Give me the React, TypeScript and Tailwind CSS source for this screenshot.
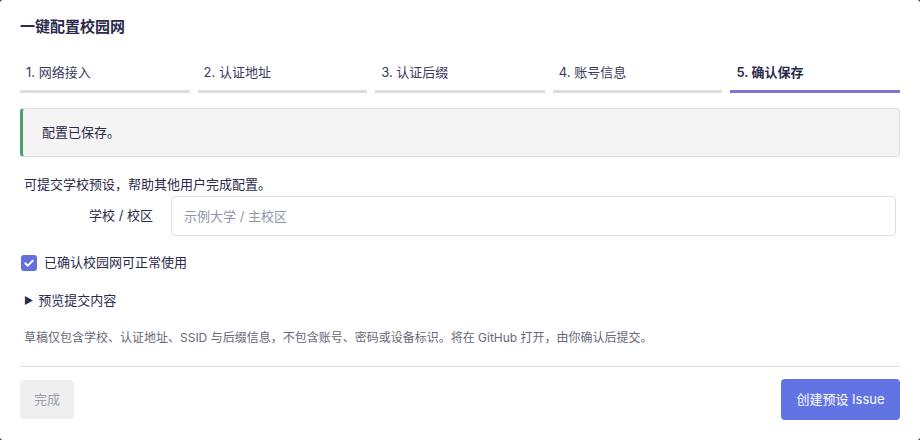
import { useState } from "react";

const steps = ["1. 网络接入", "2. 认证地址", "3. 认证后缀", "4. 账号信息", "5. 确认保存"];

function StepBar({ current }: { current: number }) {
  return (
    <div className="mt-[22px] grid grid-cols-5 gap-2">
      {steps.map((label, i) => {
        const active = i === current;
        return (
          <div key={label} className="flex flex-col">
            <div
              className={
                active
                  ? "h-[24px] pl-[6px] text-[13px] leading-[24px] font-semibold text-[#2b2a4a]"
                  : "h-[24px] pl-[6px] text-[13px] leading-[24px] text-[#3b3a5c]"
              }
            >
              {label}
            </div>
            <div
              className={
                active
                  ? "mt-[6px] h-[3px] bg-[#8172d8]"
                  : "mt-[6px] h-[3px] bg-[#dedede]"
              }
            />
          </div>
        );
      })}
    </div>
  );
}

function CheckIcon() {
  return (
    <svg viewBox="0 0 16 16" className="h-[16px] w-[16px]">
      <rect x="0" y="0" width="16" height="16" rx="3" fill="#6470e0" />
      <path
        d="M4.3 8.3 L6.8 10.7 L11.8 5.6"
        fill="none"
        stroke="#fff"
        strokeWidth="1.9"
        strokeLinecap="round"
        strokeLinejoin="round"
      />
    </svg>
  );
}

export default function App() {
  const [school, setSchool] = useState("");
  const [confirmed, setConfirmed] = useState(true);

  return (
    <div className="h-[440px] w-[920px] bg-[#2a2a2a]">
      <div
        className="flex h-full w-full flex-col rounded-[3px] bg-white px-5 text-[#2b2a4a]"
        style={{ fontFamily: "Inter, 'Noto Sans CJK SC', sans-serif" }}
      >
        <h1 className="mt-[16px] h-[22px] text-[15px] leading-[22px] font-bold text-[#2b2a4a]">
          一键配置校园网
        </h1>

        <StepBar current={4} />

        <div className="mt-[15px] flex h-[49px] items-center rounded-[4px] border border-[#dddddd] border-l-[3px] border-l-[#4a9e72] bg-[#f4f4f4] pl-[19px] text-[13px] text-[#2b2a4a]">
          配置已保存。
        </div>

        <p className="mt-[18px] pl-1 text-[13px] leading-[18px] text-[#2b2a4a]">
          可提交学校预设，帮助其他用户完成配置。
        </p>

        <div className="mt-[3px] flex items-center">
          <label className="w-[134px] pr-[1px] text-right text-[13px] text-[#2b2a4a]">
            学校 / 校区
          </label>
          <input
            value={school}
            onChange={(e) => setSchool(e.target.value)}
            placeholder="示例大学 / 主校区"
            className="ml-[17px] h-[40px] w-[725px] rounded-[4px] border border-[#dde0e5] px-[12px] text-[13px] text-[#2b2a4a] outline-none placeholder:text-[#8d96a8]"
          />
        </div>

        <label
          className="mt-[17px] flex cursor-pointer items-center gap-[7px] pl-[1px] text-[13px] text-[#2b2a4a]"
          onClick={() => setConfirmed(!confirmed)}
        >
          <span className="mt-[2px]">
            {confirmed ? (
              <CheckIcon />
            ) : (
              <span className="block h-[16px] w-[16px] rounded-[3px] border border-[#bbb]" />
            )}
          </span>
          <span className="leading-[16px]">已确认校园网可正常使用</span>
        </label>

        <div className="mt-[20px] flex items-center gap-[5px] pl-[4px] text-[13px] leading-[18px] text-[#2b2a4a]">
          <span className="text-[10px]">▶</span>
          <span>预览提交内容</span>
        </div>

        <p className="mt-[21px] pl-1 text-[12px] leading-[16px] text-[#686878]">
          草稿仅包含学校、认证地址、SSID 与后缀信息，不包含账号、密码或设备标识。将在 GitHub 打开，由你确认后提交。
        </p>

        <div className="mt-[20px] h-px bg-[#dddddd]" />

        <div className="mt-[12px] flex items-center justify-between">
          <button className="h-[39px] w-[54px] rounded-[4px] bg-[#efefef] text-[13px] text-[#9aa1ad]">
            完成
          </button>
          <button className="h-[41px] w-[119px] rounded-[4px] bg-[#6273e3] text-[13px] text-white">
            创建预设 Issue
          </button>
        </div>
      </div>
    </div>
  );
}
